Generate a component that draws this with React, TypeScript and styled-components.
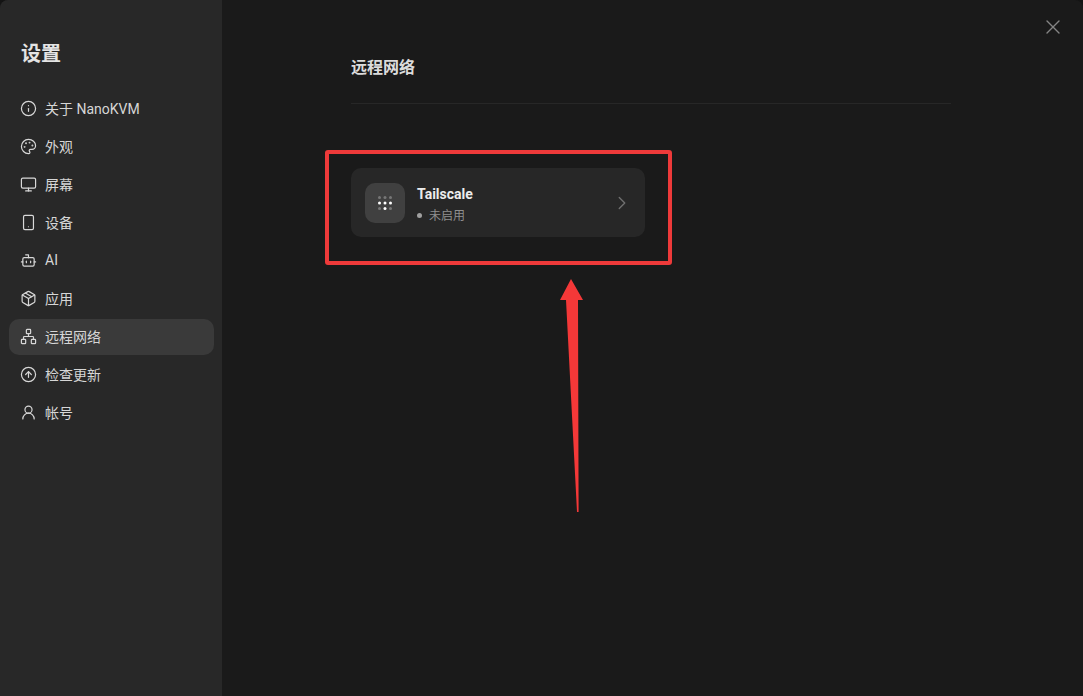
import React from "react";
import styled, { createGlobalStyle } from "styled-components";
import { Info, Palette, Monitor, Smartphone, Bot, Package, Network, CircleArrowUp, UserRound, X, ChevronRight } from "lucide-react";

const Global = createGlobalStyle`
  html, body { margin: 0; padding: 0; background: #141414; }
  #root { width: 1083px; height: 696px; }
  * { box-sizing: border-box; }
`;

const FONT = `Roboto, "Noto Sans CJK SC", sans-serif`;

const Page = styled.div`
  position: relative;
  width: 1083px;
  height: 696px;
  display: flex;
  background: #1a1a1a;
  font-family: ${FONT};
  overflow: hidden;
  border-radius: 8px 8px 0 0;
`;

const Sidebar = styled.aside`
  width: 222px;
  flex: none;
  background: #282828;
  padding: 41px 8px 0 9px;
  display: flex;
  flex-direction: column;
`;

const SideTitle = styled.h1`
  margin: 0 0 23px 12px;
  font-size: 20px;
  line-height: 27px;
  font-weight: 700;
  color: #e4e4e4;
`;

const Nav = styled.nav`
  display: flex;
  flex-direction: column;
  gap: 2px;
`;

const NavItem = styled.div<{ $active?: boolean }>`
  height: 36px;
  border-radius: 10px;
  padding: 0 0 2px 11px;
  display: flex;
  align-items: center;
  gap: 8px;
  font-size: 14px;
  color: #d6d6d6;
  background: ${(p) => (p.$active ? "#3a3a3a" : "transparent")};
  svg { flex: none; color: #d8d8d8; margin-top: 1px; }
`;

const Main = styled.main`
  flex: 1;
  padding: 57px 0 0 129px;
`;

const Content = styled.div`
  width: 600px;
`;

const Heading = styled.h2`
  margin: 0;
  font-size: 16px;
  line-height: 22px;
  font-weight: 700;
  color: #dcdcdc;
  padding-bottom: 24px;
  border-bottom: 1px solid #272727;
`;

const Card = styled.div`
  margin-top: 64px;
  width: 294px;
  height: 69px;
  background: #272727;
  border-radius: 10px;
  padding: 0 12px 0 14px;
  display: flex;
  align-items: center;
  gap: 12px;
`;

const IconTile = styled.div`
  width: 40px;
  height: 40px;
  flex: none;
  border-radius: 10px;
  background: #404040;
  display: flex;
  align-items: center;
  justify-content: center;
`;

const CardText = styled.div`
  flex: 1;
  display: flex;
  flex-direction: column;
  gap: 4px;
  padding-top: 2px;
`;

const CardName = styled.div`
  font-size: 14px;
  line-height: 20px;
  font-weight: 700;
  color: #ececec;
`;

const Status = styled.div`
  display: flex;
  align-items: center;
  gap: 7px;
  font-size: 12px;
  line-height: 16px;
  color: #8f8f8f;
`;

const StatusDot = styled.span`
  width: 5px;
  height: 5px;
  margin-top: -1px;
  border-radius: 50%;
  background: #a0a0a0;
`;

const Chevron = styled(ChevronRight)`
  flex: none;
  color: #6f6f6f;
`;

const CloseButton = styled.div`
  position: absolute;
  top: 15px;
  right: 18px;
  width: 24px;
  height: 24px;
  color: #858585;
`;

const Highlight = styled.div`
  position: absolute;
  left: 325px;
  top: 150px;
  width: 347px;
  height: 115px;
  border: 4px solid #ee3a3a;
  border-radius: 3px;
`;

const Arrow = styled.svg`
  position: absolute;
  left: 560px;
  top: 279px;
`;

const items = [
  { icon: Info, label: "关于 NanoKVM" },
  { icon: Palette, label: "外观" },
  { icon: Monitor, label: "屏幕" },
  { icon: Smartphone, label: "设备" },
  { icon: Bot, label: "AI" },
  { icon: Package, label: "应用" },
  { icon: Network, label: "远程网络", active: true },
  { icon: CircleArrowUp, label: "检查更新" },
  { icon: UserRound, label: "帐号" },
];

const dots: [number, number, string][] = [
  [1.5, 1.5, "#777"], [7, 1.5, "#777"], [12.5, 1.5, "#777"],
  [1.5, 7, "#fff"], [7, 7, "#fff"], [12.5, 7, "#fff"],
  [1.5, 12.5, "#777"], [7, 12.5, "#fff"], [12.5, 12.5, "#777"],
];

export default function App() {
  return (
    <Page>
      <Global />
      <Sidebar>
        <SideTitle>设置</SideTitle>
        <Nav>
          {items.map(({ icon: Icon, label, active }) => (
            <NavItem key={label} $active={active}>
              <Icon size={17} strokeWidth={1.7} />
              {label}
            </NavItem>
          ))}
        </Nav>
      </Sidebar>
      <Main>
        <Content>
          <Heading>远程网络</Heading>
          <Card>
            <IconTile>
              <svg width="14" height="14" viewBox="0 0 14 14">
                {dots.map(([x, y, c]) => (
                  <circle key={`${x}-${y}`} cx={x} cy={y} r="1.5" fill={c} />
                ))}
              </svg>
            </IconTile>
            <CardText>
              <CardName>Tailscale</CardName>
              <Status>
                <StatusDot />
                未启用
              </Status>
            </CardText>
            <Chevron size={22} strokeWidth={1.5} />
          </Card>
        </Content>
      </Main>
      <CloseButton>
        <X size={24} strokeWidth={1.4} />
      </CloseButton>
      <Highlight />
      <Arrow width="24" height="234" viewBox="0 0 24 234">
        <path d="M11 0 L23 21 L18 21 L18.6 233 L17 233 L6 21 L0 21 Z" fill="#f43838" />
      </Arrow>
    </Page>
  );
}
